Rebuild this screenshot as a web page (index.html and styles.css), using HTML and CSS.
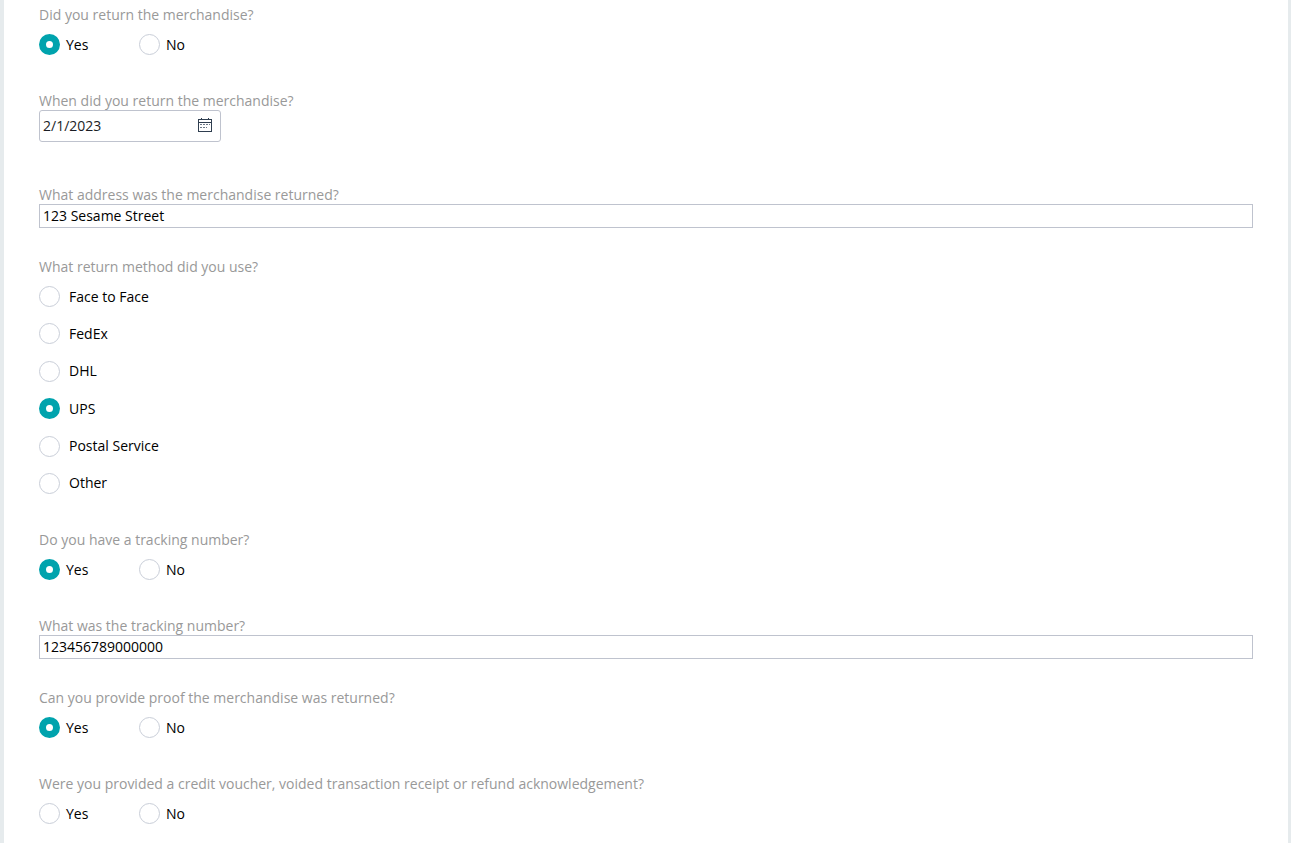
FILE: index.html
```
<!DOCTYPE html>
<html lang="en">
<head>
    <meta charset="UTF-8">
    <meta name="viewport" content="width=device-width, initial-scale=1">
    <title>Merchandise return questions</title>
    <link rel="stylesheet" href="styles.css">
</head>
<body>
    <form class="form-panel">
        <fieldset class="question">
            <legend class="question-label">Did you return the merchandise?</legend>
            <div class="options">
                <label class="option"><input type="radio" name="returned" value="yes" checked>Yes</label>
                <label class="option"><input type="radio" name="returned" value="no">No</label>
            </div>
        </fieldset>

        <div class="question question-date">
            <label class="question-label" for="returnDate">When did you return the merchandise?</label>
            <div class="date-box">
                <input class="date-input" type="text" id="returnDate" value="2/1/2023">
                <button class="date-btn" type="button" aria-label="Open calendar">
                    <svg width="14" height="14" viewBox="0 0 14 14" shape-rendering="crispEdges">
                        <path d="M.5 1.5h13v12H.5zM0 4.5h14M3.5 0v2M10.5 0v2" fill="none" stroke="#2f3e50"/>
                        <path d="M2 6.5h10M2 9.5h7" fill="none" stroke="#6c7886" stroke-dasharray="2 1"/>
                    </svg>
                </button>
            </div>
        </div>

        <div class="question question-text">
            <label class="question-label" for="returnAddress">What address was the merchandise returned?</label>
            <input class="text-input" type="text" id="returnAddress" value="123 Sesame Street">
        </div>

        <fieldset class="question">
            <legend class="question-label">What return method did you use?</legend>
            <div class="options options-list">
                <label class="option"><input type="radio" name="method" value="face">Face to Face</label>
                <label class="option"><input type="radio" name="method" value="fedex">FedEx</label>
                <label class="option"><input type="radio" name="method" value="dhl">DHL</label>
                <label class="option"><input type="radio" name="method" value="ups" checked>UPS</label>
                <label class="option"><input type="radio" name="method" value="postal">Postal Service</label>
                <label class="option"><input type="radio" name="method" value="other">Other</label>
            </div>
        </fieldset>

        <fieldset class="question">
            <legend class="question-label">Do you have a tracking number?</legend>
            <div class="options">
                <label class="option"><input type="radio" name="hasTracking" value="yes" checked>Yes</label>
                <label class="option"><input type="radio" name="hasTracking" value="no">No</label>
            </div>
        </fieldset>

        <div class="question question-text">
            <label class="question-label" for="trackingNumber">What was the tracking number?</label>
            <input class="text-input" type="text" id="trackingNumber" value="123456789000000">
        </div>

        <fieldset class="question">
            <legend class="question-label">Can you provide proof the merchandise was returned?</legend>
            <div class="options">
                <label class="option"><input type="radio" name="proof" value="yes" checked>Yes</label>
                <label class="option"><input type="radio" name="proof" value="no">No</label>
            </div>
        </fieldset>

        <fieldset class="question">
            <legend class="question-label">Were you provided a credit voucher, voided transaction receipt or refund acknowledgement?</legend>
            <div class="options">
                <label class="option"><input type="radio" name="voucher" value="yes">Yes</label>
                <label class="option"><input type="radio" name="voucher" value="no">No</label>
            </div>
        </fieldset>
    </form>
</body>
</html>
```
FILE: styles.css
```
* {
    box-sizing: border-box;
    margin: 0;
    padding: 0;
}
body {
    font-family: "Open Sans", "Noto Sans", sans-serif;
    font-size: 14px;
    line-height: 18px;
    color: #000;
    background-color: #fff;
}
.form-panel {
    min-height: 100vh;
    padding: 6px 35px 0;
    border-left: 4px solid #e6ebed;
    border-right: 3px solid #e6ebed;
}
.question {
    border: none;
    margin-bottom: 37px;
}
.question:last-child {
    margin-bottom: 0;
    padding-bottom: 16px;
}
.question-date {
    margin-bottom: 44px;
}
.question-text {
    margin-bottom: 30px;
}
.question-label {
    display: block;
    color: #999;
}
.options {
    display: flex;
    margin-top: 10px;
}
.option {
    display: flex;
    align-items: center;
    gap: 6px;
    width: 100px;
    cursor: pointer;
}
.options-list {
    flex-direction: column;
    justify-content: space-between;
    min-height: 208px;
}
.options-list .option {
    gap: 9px;
    width: auto;
}
.option input {
    appearance: none;
    flex: none;
    width: 21px;
    height: 21px;
    border: 1px solid #c9ced8;
    border-radius: 50%;
    background-color: #fff;
    cursor: pointer;
}
.option input:checked {
    border: 7px solid #00a3ad;
}
.option input:focus-visible {
    outline: 2px solid #00a3ad;
    outline-offset: 2px;
}
.text-input {
    display: block;
    width: 100%;
    height: 24px;
    padding: 0 3px 2px;
    border: 1px solid #bfc3ce;
    font: inherit;
    color: #000;
}
.date-box {
    display: flex;
    align-items: center;
    width: 182px;
    height: 32px;
    padding-bottom: 2px;
    border: 1px solid #bfc3ce;
    border-radius: 3px;
}
.date-input {
    flex: 1;
    min-width: 0;
    height: 100%;
    padding: 0 3px;
    border: none;
    background: none;
    font: inherit;
    color: #1a1d24;
}
.date-btn {
    display: flex;
    align-items: center;
    justify-content: center;
    width: 30px;
    height: 28px;
    border: none;
    background: none;
    cursor: pointer;
}
```
